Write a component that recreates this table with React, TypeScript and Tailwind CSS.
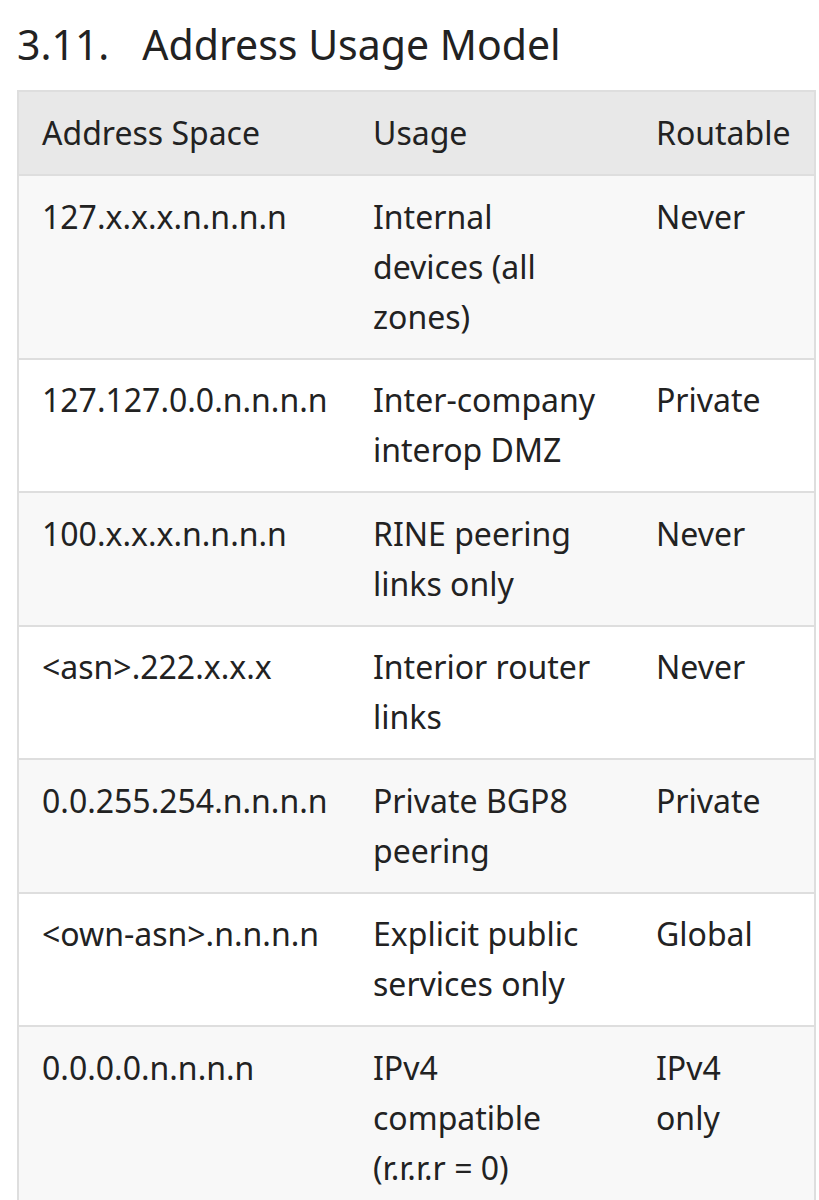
const ROWS: { space: string; usage: string; routable: string }[] = [
  { space: "127.x.x.x.n.n.n.n", usage: "Internal devices (all zones)", routable: "Never" },
  { space: "127.127.0.0.n.n.n.n", usage: "Inter-company interop DMZ", routable: "Private" },
  { space: "100.x.x.x.n.n.n.n", usage: "RINE peering links only", routable: "Never" },
  { space: "<asn>.222.x.x.x", usage: "Interior router links", routable: "Never" },
  { space: "0.0.255.254.n.n.n.n", usage: "Private BGP8 peering", routable: "Private" },
  { space: "<own-asn>.n.n.n.n", usage: "Explicit public services only", routable: "Global" },
  { space: "0.0.0.0.n.n.n.n", usage: "IPv4 compatible (r.r.r.r = 0)", routable: "IPv4 only" },
];

export default function App() {
  return (
    <div className="min-h-[1200px] bg-white pl-[17px] pr-[4px] pt-[17px] font-['Noto_Sans',sans-serif] text-[#222]">
      <h2 className="mb-[19px] text-[41px] leading-[54px] font-normal">
        3.11.<span className="inline-block w-[33px]" />Address Usage Model
      </h2>

      <table className="w-[799px] table-fixed border-collapse border-2 border-[#dedede] text-[32px] leading-[50px]">
        <colgroup>
          <col className="w-[332px]" />
          <col className="w-[283px]" />
          <col />
        </colgroup>
        <thead>
          <tr className="bg-[#e8e8e8]">
            <th className="border-b-2 border-[#dedede] pl-[23px] pr-[12px] py-[16px] text-left font-normal">Address Space</th>
            <th className="border-b-2 border-[#dedede] pl-[23px] pr-[28px] py-[16px] text-left font-normal">Usage</th>
            <th className="border-b-2 border-[#dedede] pl-[23px] pr-[28px] py-[16px] text-left font-normal">Routable</th>
          </tr>
        </thead>
        <tbody>
          {ROWS.map((r, i) => (
            <tr key={i} className={i % 2 === 0 ? "bg-[#f8f8f8]" : "bg-white"}>
              <td className="border-b-2 border-[#dedede] pl-[23px] pr-[12px] pt-[15.5px] pb-[16px] align-top">{r.space}</td>
              <td className="border-b-2 border-[#dedede] pl-[23px] pr-[28px] pt-[15.5px] pb-[16px] align-top">{r.usage}</td>
              <td className="border-b-2 border-[#dedede] pl-[23px] pr-[28px] pt-[15.5px] pb-[16px] align-top">{r.routable}</td>
            </tr>
          ))}
        </tbody>
      </table>
    </div>
  );
}
